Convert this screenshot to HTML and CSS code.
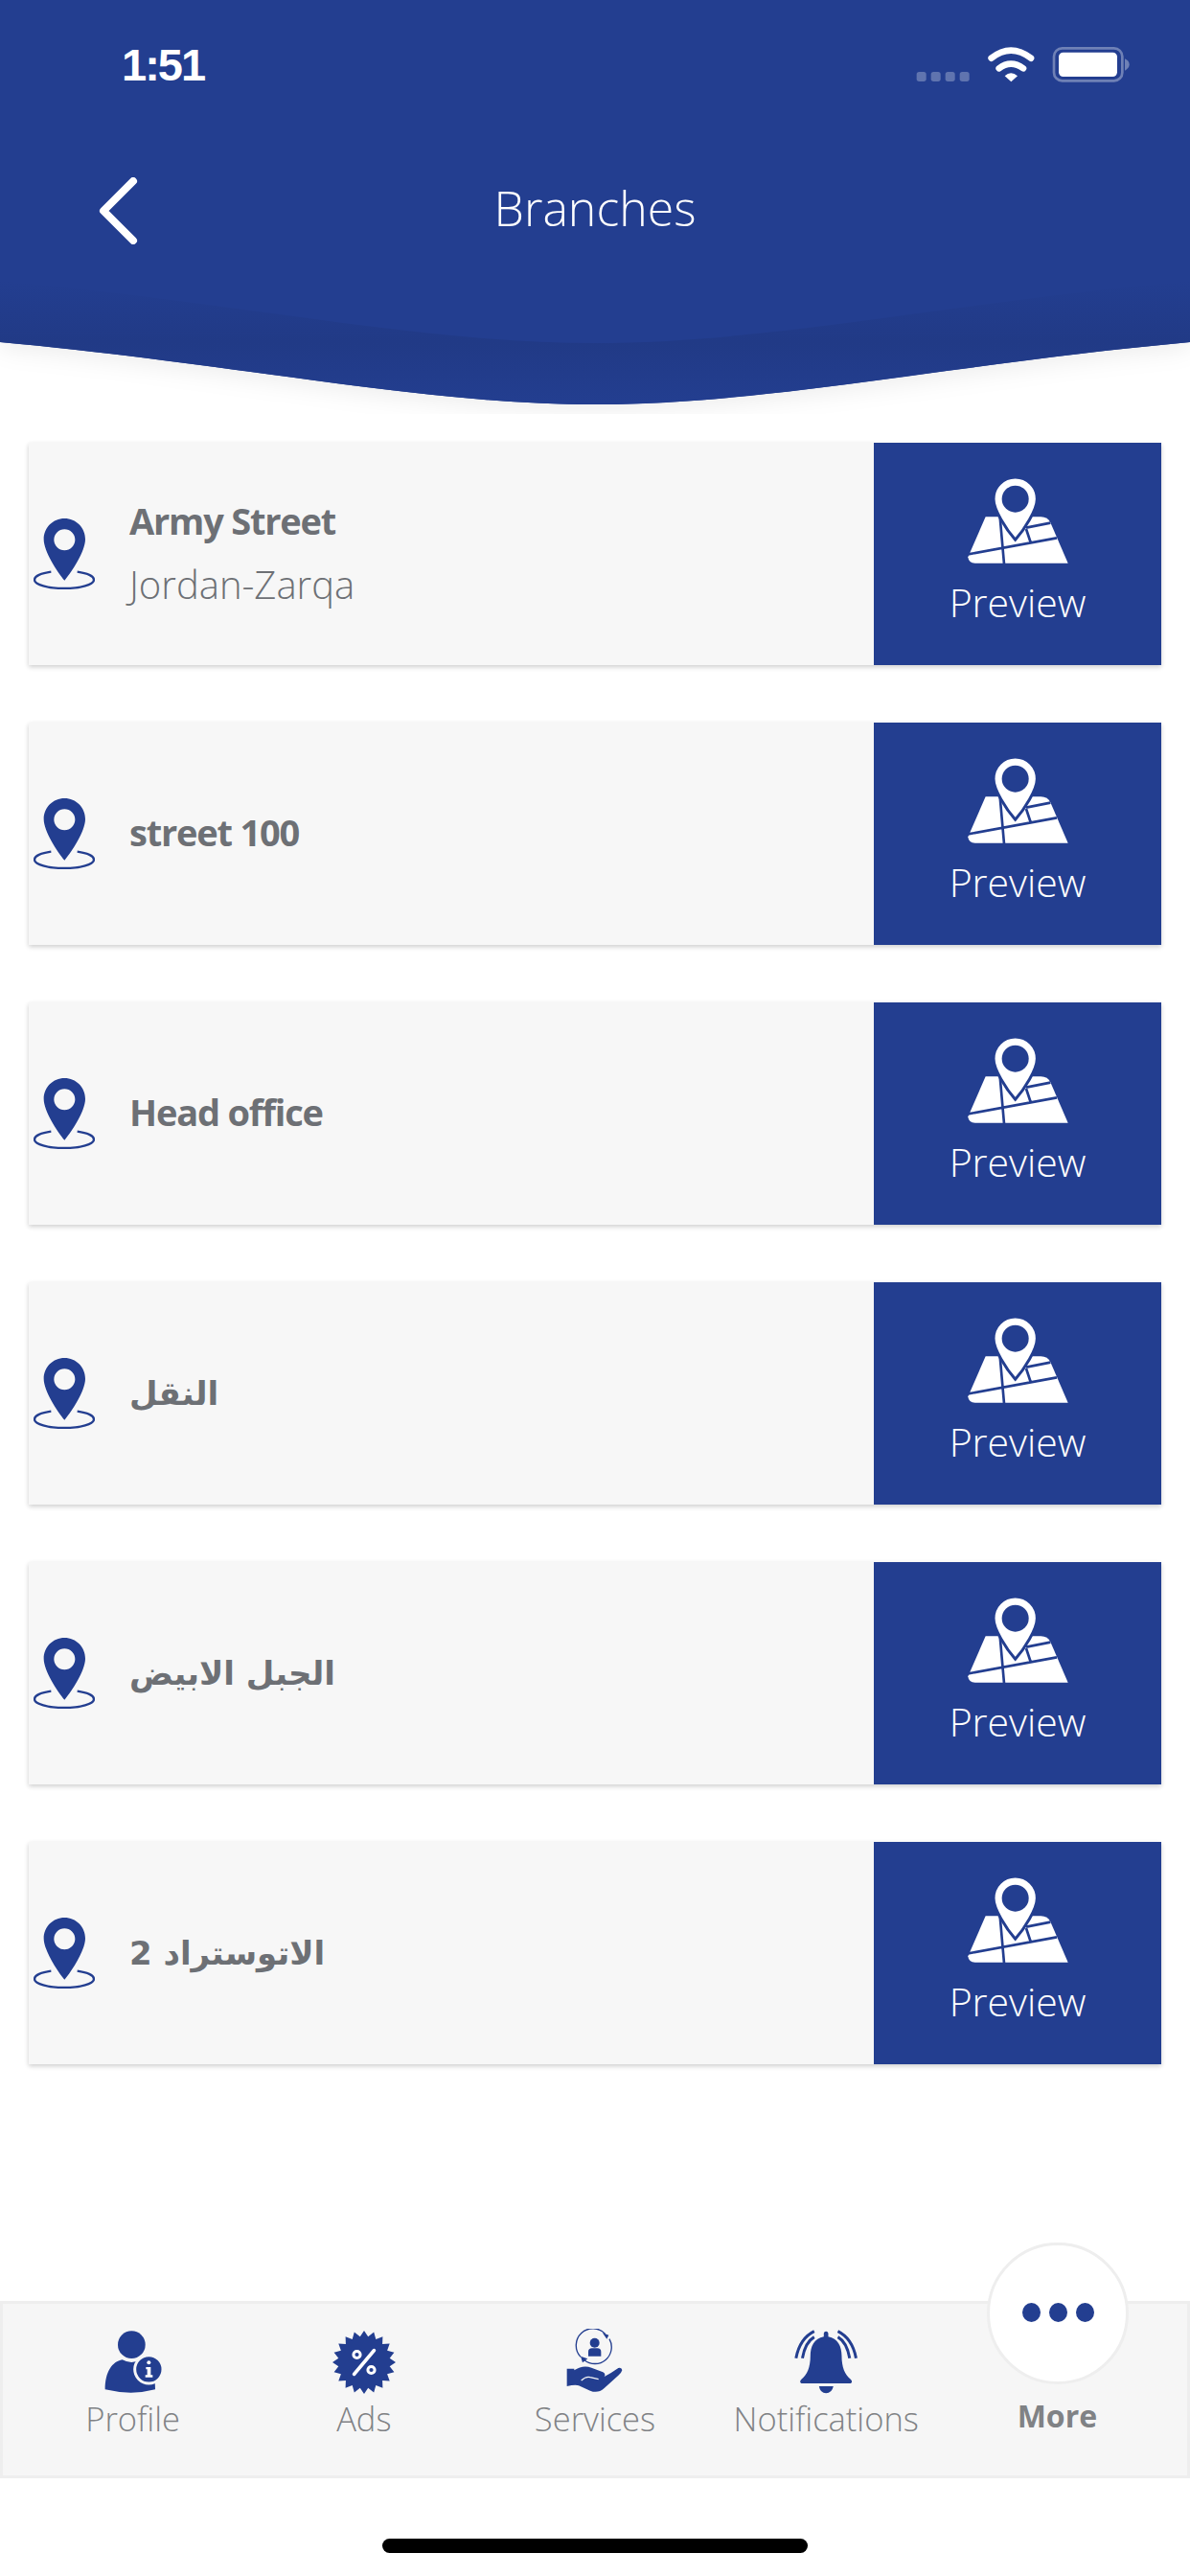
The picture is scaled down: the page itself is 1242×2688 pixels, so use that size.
FILE: index.html
```html
<!DOCTYPE html>
<html lang="en">
<head>
    <meta charset="UTF-8">
    <meta name="viewport" content="width=device-width, initial-scale=1.0">
    <title>Branches</title>
    <link rel="stylesheet" href="styles.css">
</head>
<body>
    <svg class="defs" width="0" height="0">
        <symbol id="pin" viewBox="105 303 192 222">
            <path fill-rule="evenodd" d="M202 303C238 303 267 332 267 368C267 405 225 470 202 497C179 470 137 405 137 368C137 332 166 303 202 303ZM202 337A33 33 0 1 0 202 403A33 33 0 1 0 202 337Z"/>
            <path class="pin-ring" d="M160 470C125 475 108 485 108 495C108 510 150 522 201 522C252 522 294 510 294 495C294 485 277 475 242 470"/>
        </symbol>
        <symbol id="map" viewBox="380 145 330 285">
            <path class="map-sheet" d="M445 272H618Q640 272 648 290L703 417H412Q392 417 390 398Z"/>
            <path class="map-road" d="M386 390L668 338M490 272L503 420M572 306L648 291M572 310L586 352"/>
            <path class="map-pin" d="M538 148C576 148 606 178 606 216C606 250 566 312 538 344C510 312 470 250 470 216C470 178 500 148 538 148Z"/>
            <circle class="map-hole" cx="538" cy="216" r="42"/>
        </symbol>
    </svg>

    <div class="page">
        <header class="header">
            <div class="header-top">
                <div class="status-bar">
                    <span class="status-time">1:51</span>
                    <svg class="status-icons" width="240" height="60" viewBox="0 0 720 180">
                        <g class="signal">
                            <rect x="20" y="105" width="30" height="30" rx="8"/>
                            <rect x="65" y="105" width="30" height="30" rx="8"/>
                            <rect x="110" y="105" width="30" height="30" rx="8"/>
                            <rect x="155" y="105" width="30" height="30" rx="8"/>
                        </g>
                        <path class="wifi-arc" d="M254 62Q315 14 378 62"/>
                        <path class="wifi-arc" d="M278 94Q315 66 354 94"/>
                        <path class="wifi-dot" d="M296 118Q315 100 336 118L316 136Z"/>
                        <rect class="battery-case" x="450" y="31" width="214" height="102" rx="26"/>
                        <rect class="battery-fill" x="465" y="44" width="183" height="76" rx="14"/>
                        <path class="battery-cap" d="M672 64Q686 70 686 82Q686 94 672 101Z"/>
                    </svg>
                </div>
                <div class="title-bar">
                    <svg class="back-icon" width="41" height="70" viewBox="0 0 41 70">
                        <path d="M36 4L5 35L36 66"/>
                    </svg>
                    <h1 class="title">Branches</h1>
                    <span></span>
                </div>
            </div>
            <svg class="wave" width="1242" height="142" viewBox="0 0 1242 142">
                <defs>
                    <linearGradient id="waveShade" x1="0" y1="0" x2="0" y2="1">
                        <stop offset="0" stop-color="#233e90"/>
                        <stop offset="0.5" stop-color="#213a86"/>
                        <stop offset="1" stop-color="#233e90"/>
                    </linearGradient>
                </defs>
                <path class="wave-fill" d="M0 67C250 90 440 132 621 132C802 132 992 90 1242 67V0H0Z"/>
                <path fill="url(#waveShade)" d="M0 3C250 26 440 68 621 68C802 68 992 26 1242 3V67C992 90 802 132 621 132C440 132 250 90 0 67Z"/>
            </svg>
        </header>

        <main class="branch-list">
            <div class="branch">
                <div class="branch-info">
                    <svg class="branch-pin" width="64" height="74"><use href="#pin"/></svg>
                    <div>
                        <div class="branch-name">Army Street</div>
                        <div class="branch-place">Jordan-Zarqa</div>
                    </div>
                </div>
                <a class="preview"><svg width="110" height="95"><use href="#map"/></svg><span>Preview</span></a>
            </div>
            <div class="branch">
                <div class="branch-info">
                    <svg class="branch-pin" width="64" height="74"><use href="#pin"/></svg>
                    <div class="branch-name">street 100</div>
                </div>
                <a class="preview"><svg width="110" height="95"><use href="#map"/></svg><span>Preview</span></a>
            </div>
            <div class="branch">
                <div class="branch-info">
                    <svg class="branch-pin" width="64" height="74"><use href="#pin"/></svg>
                    <div class="branch-name">Head office</div>
                </div>
                <a class="preview"><svg width="110" height="95"><use href="#map"/></svg><span>Preview</span></a>
            </div>
            <div class="branch">
                <div class="branch-info">
                    <svg class="branch-pin" width="64" height="74"><use href="#pin"/></svg>
                    <div class="branch-name arabic">النقل</div>
                </div>
                <a class="preview"><svg width="110" height="95"><use href="#map"/></svg><span>Preview</span></a>
            </div>
            <div class="branch">
                <div class="branch-info">
                    <svg class="branch-pin" width="64" height="74"><use href="#pin"/></svg>
                    <div class="branch-name arabic">الجبل الابيض</div>
                </div>
                <a class="preview"><svg width="110" height="95"><use href="#map"/></svg><span>Preview</span></a>
            </div>
            <div class="branch">
                <div class="branch-info">
                    <svg class="branch-pin" width="64" height="74"><use href="#pin"/></svg>
                    <div class="branch-name arabic">الاتوستراد 2</div>
                </div>
                <a class="preview"><svg width="110" height="95"><use href="#map"/></svg><span>Preview</span></a>
            </div>
        </main>

        <nav class="tabbar">
            <a class="tab">
                <svg class="tab-icon" width="90" height="70" viewBox="-19 15 270 210">
                    <ellipse cx="111" cy="65" rx="43" ry="43"/>
                    <path d="M28 205C28 150 50 118 82 112Q111 128 140 112C172 118 185 150 185 205Q111 225 28 205Z"/>
                    <circle class="info-ring" cx="165" cy="142" r="44"/>
                    <circle class="info-dot" cx="165" cy="121" r="6"/>
                    <path class="info-stem" d="M156 135H171V160H177V167H154V160H160V142H156Z"/>
                </svg>
                <span class="tab-label">Profile</span>
            </a>
            <a class="tab">
                <svg class="tab-icon" width="90" height="70" viewBox="-45 -35 90 70">
                    <polygon points="0,-33 4.2,-26.7 10.2,-31.4 12.3,-24.1 19.4,-26.7 19.1,-19.1 26.7,-19.4 24.1,-12.3 31.4,-10.2 26.7,-4.2 33,0 26.7,4.2 31.4,10.2 24.1,12.3 26.7,19.4 19.1,19.1 19.4,26.7 12.3,24.1 10.2,31.4 4.2,26.7 0,33 -4.2,26.7 -10.2,31.4 -12.3,24.1 -19.4,26.7 -19.1,19.1 -26.7,19.4 -24.1,12.3 -31.4,10.2 -26.7,4.2 -33,0 -26.7,-4.2 -31.4,-10.2 -24.1,-12.3 -26.7,-19.4 -19.1,-19.1 -19.4,-26.7 -12.3,-24.1 -10.2,-31.4 -4.2,-26.7"/>
                    <g class="percent">
                        <circle cx="-7.5" cy="-8" r="3.6"/>
                        <circle cx="7.5" cy="8" r="3.6"/>
                        <path d="M10.5 -12.5L-10.5 12.5"/>
                    </g>
                </svg>
                <span class="tab-label">Ads</span>
            </a>
            <a class="tab">
                <svg class="tab-icon" width="90" height="70" viewBox="-12 30 270 210">
                    <path class="svc-ring" d="M155 46A52 52 0 0 0 78 118M90 128A52 52 0 0 0 168 62"/>
                    <path d="M146 42L166 50L160 62ZM78 116L100 124L84 136Z"/>
                    <circle cx="122" cy="74" r="15"/>
                    <path d="M102 116V102Q102 91 114 91H130Q142 91 142 102V116Z"/>
                    <path d="M35 155H58V160Q85 142 112 152L148 166Q158 172 152 180Q175 168 196 153Q207 150 208 160Q206 168 196 176L152 216Q132 234 108 224L72 208Q62 204 35 210Z"/>
                    <path class="svc-crease" d="M80 192Q95 178 108 182L134 188"/>
                </svg>
                <span class="tab-label">Services</span>
            </a>
            <a class="tab">
                <svg class="tab-icon" width="90" height="70" viewBox="-8.4 30 270 210">
                    <path d="M120 55V46Q120 38 127 38Q134 38 134 46V55C164 60 176 86 176 115C176 150 186 175 204 188Q212 196 204 201H50Q42 196 50 188C68 175 78 150 78 115C78 86 90 60 120 55Z"/>
                    <path d="M105 210H150Q145 232 127 232Q109 232 105 210Z"/>
                    <path class="bell-wave" d="M90 38Q45 60 33 122M90 56Q62 72 53 122M164 38Q209 60 221 122M164 56Q192 72 201 122"/>
                </svg>
                <span class="tab-label">Notifications</span>
            </a>
            <a class="tab tab-more">
                <span class="more-button">
                    <i></i><i></i><i></i>
                </span>
                <span class="tab-label">More</span>
            </a>
        </nav>

        <div class="home-area"><div class="home-bar"></div></div>
    </div>
</body>
</html>
```

FILE: styles.css
```css
body {
    margin: 0;
    background-color: #fff;
    font-family: "Open Sans", "DejaVu Sans", sans-serif;
}
.defs {
    display: block;
    height: 0;
}
.page {
    display: flex;
    flex-direction: column;
    height: 2688px;
    overflow: hidden;
}

/* header */
.header-top {
    height: 290px;
    overflow: hidden;
    background-color: #233e90;
    color: #fff;
}
.status-bar {
    display: flex;
    justify-content: space-between;
    align-items: center;
    height: 60px;
    margin-top: 40px;
    padding: 0 52px 0 127px;
}
.status-time {
    font-family: "Liberation Sans", sans-serif;
    font-size: 47px;
    font-weight: 700;
    letter-spacing: -2px;
    line-height: 60px;
    margin-top: -4px;
}
.signal {
    fill: #fff;
    opacity: 0.28;
}
.wifi-arc {
    fill: none;
    stroke: #fff;
    stroke-width: 20;
    stroke-linecap: round;
}
.wifi-dot, .battery-fill {
    fill: #fff;
}
.battery-case {
    fill: none;
    stroke: #fff;
    stroke-width: 8;
    opacity: 0.35;
}
.battery-cap {
    fill: #fff;
    opacity: 0.35;
}
.title-bar {
    display: grid;
    grid-template-columns: 1fr auto 1fr;
    align-items: center;
    height: 100px;
    margin-top: 70px;
    padding-left: 103px;
    padding-right: 103px;
}
.back-icon path {
    fill: none;
    stroke: #fff;
    stroke-width: 8;
    stroke-linecap: round;
    stroke-linejoin: round;
}
.title {
    margin: -6px 0 0;
    font-size: 50px;
    font-weight: 300;
    line-height: 60px;
}
.wave {
    display: block;
}
.wave-fill {
    fill: #233e90;
    filter: drop-shadow(0 6px 12px rgba(0, 0, 0, 0.07));
}

/* branches */
.branch-list {
    display: flex;
    flex-direction: column;
    flex: 1;
    gap: 60px;
    padding: 30px 30px 0;
}
.branch {
    display: flex;
    height: 232px;
    background-color: #f7f7f7;
    box-shadow: 0 2px 5px rgba(0, 0, 0, 0.2);
}
.branch-info {
    display: flex;
    flex: 1;
    align-items: center;
    gap: 36px;
    padding-left: 5px;
    color: #6d7075;
}
.branch-pin {
    fill: #233e90;
}
.pin-ring {
    fill: none;
    stroke: #233e90;
    stroke-width: 7;
}
.branch-name {
    margin-top: -4px;
    font-size: 38px;
    font-weight: 700;
    letter-spacing: -1.2px;
    line-height: 52px;
}
.branch-name.arabic {
    margin-top: 0;
    font-family: "DejaVu Sans", sans-serif;
    font-size: 34px;
    letter-spacing: 0;
}
.branch-place {
    font-size: 40px;
    font-weight: 300;
    line-height: 52px;
    margin-top: 15px;
}
.preview {
    display: flex;
    flex-direction: column;
    align-items: center;
    width: 300px;
    padding-top: 35px;
    box-sizing: border-box;
    background-color: #233e90;
    color: #fff;
    font-size: 41px;
    font-weight: 300;
    line-height: 52px;
}
.preview span {
    margin-top: 10px;
}
.map-sheet, .map-pin {
    fill: #fff;
}
.map-road {
    fill: none;
    stroke: #233e90;
    stroke-width: 8;
}
.map-pin {
    stroke: #233e90;
    stroke-width: 9;
}
.map-hole {
    fill: #233e90;
}

/* tab bar */
.tabbar {
    display: grid;
    grid-template-columns: repeat(5, 1fr);
    height: 185px;
    padding: 26px 15px 0;
    box-sizing: border-box;
    background-color: #f6f6f6;
    border: 3px solid #eee;
}
.tab {
    position: relative;
    display: flex;
    flex-direction: column;
    align-items: center;
}
.tab-icon {
    fill: #233e90;
}
.tab-label {
    color: #808285;
    font-size: 34.5px;
    font-weight: 300;
    line-height: 48px;
    white-space: nowrap;
}
.tab-more .tab-label {
    margin-top: 67px;
    font-size: 32px;
    font-weight: 700;
}
.more-button {
    position: absolute;
    top: -90px;
    left: 50%;
    display: flex;
    justify-content: center;
    align-items: center;
    gap: 9px;
    width: 148px;
    height: 148px;
    margin-left: -73px;
    box-sizing: border-box;
    background-color: #fff;
    border: 3px solid #eee;
    border-radius: 50%;
}
.more-button i {
    width: 19px;
    height: 20px;
    margin-bottom: 2px;
    background-color: #233e90;
    border-radius: 50%;
}
.info-ring {
    fill: #233e90;
    stroke: #f6f6f6;
    stroke-width: 9;
}
.info-dot, .info-stem {
    fill: #fff;
}
.percent circle, .percent path {
    fill: none;
    stroke: #fff;
}
.percent circle {
    stroke-width: 3;
}
.percent path {
    stroke-width: 3.5;
    stroke-linecap: round;
}
.svc-ring {
    fill: none;
    stroke: #233e90;
    stroke-width: 4;
}
.svc-crease {
    fill: none;
    stroke: #f6f6f6;
    stroke-width: 4;
}
.bell-wave {
    fill: none;
    stroke: #233e90;
    stroke-width: 9;
}

/* home indicator */
.home-area {
    display: flex;
    justify-content: center;
    height: 102px;
}
.home-bar {
    width: 444px;
    height: 15px;
    margin-top: 63px;
    background-color: #000;
    border-radius: 8px;
}
```
